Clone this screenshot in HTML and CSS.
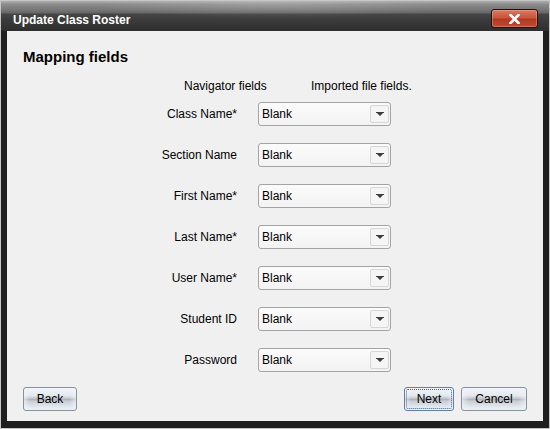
FILE: index.html
```html
<!DOCTYPE html>
<html>
<head>
<meta charset="utf-8">
<link rel="stylesheet" href="styles.css">
</head>
<body>
<div class="window">
  <div class="titlebar">
    <span class="title">Update Class Roster</span>
    <div class="close">
      <svg width="11" height="10" viewBox="0 0 11 10"><path d="M1.5 1 L9.5 9 M9.5 1 L1.5 9" stroke="#fff" stroke-width="2.6" stroke-linecap="square"/></svg>
    </div>
  </div>
  <div class="content">
    <h1 class="heading">Mapping fields</h1>
    <div class="colheads">
      <span class="colhead-nav">Navigator fields</span>
      <span class="colhead-imp">Imported file fields.</span>
    </div>
    <div class="rows">
      <div class="row"><span class="label">Class Name*</span><div class="select"><span class="value">Blank</span><span class="arrow"><svg width="8" height="4" viewBox="0 0 8 4"><path d="M0 0H8V1H7L4 4L1 1H0Z" fill="#3c3c3c"/></svg></span></div></div>
      <div class="row"><span class="label">Section Name</span><div class="select"><span class="value">Blank</span><span class="arrow"><svg width="8" height="4" viewBox="0 0 8 4"><path d="M0 0H8V1H7L4 4L1 1H0Z" fill="#3c3c3c"/></svg></span></div></div>
      <div class="row"><span class="label">First Name*</span><div class="select"><span class="value">Blank</span><span class="arrow"><svg width="8" height="4" viewBox="0 0 8 4"><path d="M0 0H8V1H7L4 4L1 1H0Z" fill="#3c3c3c"/></svg></span></div></div>
      <div class="row"><span class="label">Last Name*</span><div class="select"><span class="value">Blank</span><span class="arrow"><svg width="8" height="4" viewBox="0 0 8 4"><path d="M0 0H8V1H7L4 4L1 1H0Z" fill="#3c3c3c"/></svg></span></div></div>
      <div class="row"><span class="label">User Name*</span><div class="select"><span class="value">Blank</span><span class="arrow"><svg width="8" height="4" viewBox="0 0 8 4"><path d="M0 0H8V1H7L4 4L1 1H0Z" fill="#3c3c3c"/></svg></span></div></div>
      <div class="row"><span class="label">Student ID</span><div class="select"><span class="value">Blank</span><span class="arrow"><svg width="8" height="4" viewBox="0 0 8 4"><path d="M0 0H8V1H7L4 4L1 1H0Z" fill="#3c3c3c"/></svg></span></div></div>
      <div class="row"><span class="label">Password</span><div class="select"><span class="value">Blank</span><span class="arrow"><svg width="8" height="4" viewBox="0 0 8 4"><path d="M0 0H8V1H7L4 4L1 1H0Z" fill="#3c3c3c"/></svg></span></div></div>
    </div>
    <div class="buttons">
      <button class="btn btn-back">Back</button>
      <div class="right-buttons">
        <button class="btn btn-next">Next</button>
        <button class="btn btn-cancel">Cancel</button>
      </div>
    </div>
  </div>
</div>
</body>
</html>
```

FILE: styles.css
```css
html, body {
  margin: 0;
  padding: 0;
}
body {
  width: 550px;
  height: 429px;
  font-family: "Liberation Sans", Arial, sans-serif;
  font-size: 12px;
  color: #000;
}
.window {
  box-sizing: border-box;
  width: 550px;
  height: 429px;
  border: 1px solid #c6c6c6;
  background: #1f1f1f;
  display: flex;
  flex-direction: column;
}
.titlebar {
  height: 30px;
  flex: none;
  display: flex;
  justify-content: space-between;
  align-items: flex-start;
  background:
    radial-gradient(ellipse 45% 70% at 50% 10%, rgba(255,255,255,0.16), rgba(255,255,255,0) 70%),
    linear-gradient(#b0b0b0 0px, #8e8e8e 3px, #7a7a7a 8px, #666 12px, #454545 13px, #3a3a3a 20px, #2e2e2e 30px);
}
.title {
  margin: 12px 0 0 12px;
  font-weight: bold;
  font-size: 12px;
  line-height: 14px;
  color: #fff;
}
.close {
  box-sizing: border-box;
  width: 47px;
  height: 19px;
  margin: 8px 11px 0 0;
  border: 1px solid #2a0c06;
  border-radius: 3px;
  box-shadow: inset 0 0 0 1px rgba(255, 200, 190, 0.35);
  background: linear-gradient(#d97a62 0%, #c9553c 45%, #b23a22 55%, #c04a30 100%);
  display: flex;
  align-items: center;
  justify-content: center;
}
.content {
  flex: none;
  height: 390px;
  margin: 0 6px;
  background: #f0f0f0;
  box-sizing: border-box;
  padding: 17px 16px 10px 16px;
  display: flex;
  flex-direction: column;
}
.heading {
  margin: 0;
  font-size: 15px;
  line-height: 18px;
  font-weight: bold;
}
.colheads {
  margin: 13px 0 0 161px;
  display: flex;
  line-height: 14px;
}
.colhead-nav {
  width: 127px;
}
.rows {
  margin-top: 9px;
  display: flex;
  flex-direction: column;
  gap: 17px;
}
.row {
  display: flex;
  align-items: center;
  height: 24px;
}
.label {
  width: 214px;
  text-align: right;
  margin-right: 21px;
}
.select {
  box-sizing: border-box;
  width: 133px;
  height: 24px;
  border: 1px solid #a4a4a4;
  border-radius: 3px;
  background: linear-gradient(#fbfbfb, #f3f3f3);
  display: flex;
  align-items: center;
  justify-content: space-between;
  padding: 0 1px 0 3px;
}
.arrow {
  box-sizing: border-box;
  width: 19px;
  height: 18px;
  border: 1px solid #d6d6d6;
  border-radius: 2px;
  background: #f5f5f5;
  display: flex;
  align-items: center;
  justify-content: center;
}
.arrow svg {
  display: block;
}
.buttons {
  margin-top: auto;
  display: flex;
  justify-content: space-between;
}
.right-buttons {
  display: flex;
  gap: 7px;
}
.btn {
  position: relative;
  box-sizing: border-box;
  height: 24px;
  padding: 0;
  border: 1px solid #8393a4;
  border-radius: 3px;
  font-family: "Liberation Sans", Arial, sans-serif;
  font-size: 12px;
  color: #000;
  background:
    linear-gradient(to right, rgba(240,243,247,0.7) 0%, rgba(240,243,247,0) 12%, rgba(240,243,247,0) 88%, rgba(240,243,247,0.7) 100%),
    linear-gradient(#f2f5f9 0%, #e3e8ee 35%, #c3c8cf 47%, #aeb3ba 52%, #c9ced5 60%, #e2e7ee 85%, #edf1f5 100%);
}
.btn-back { width: 54px; }
.btn-next {
  width: 50px;
  border-color: #5f7fa4;
}
.btn-next::after {
  content: "";
  position: absolute;
  inset: 1px;
  border: 1px dotted #46678c;
  border-radius: 2px;
}
.btn-cancel { width: 66px; }
```
